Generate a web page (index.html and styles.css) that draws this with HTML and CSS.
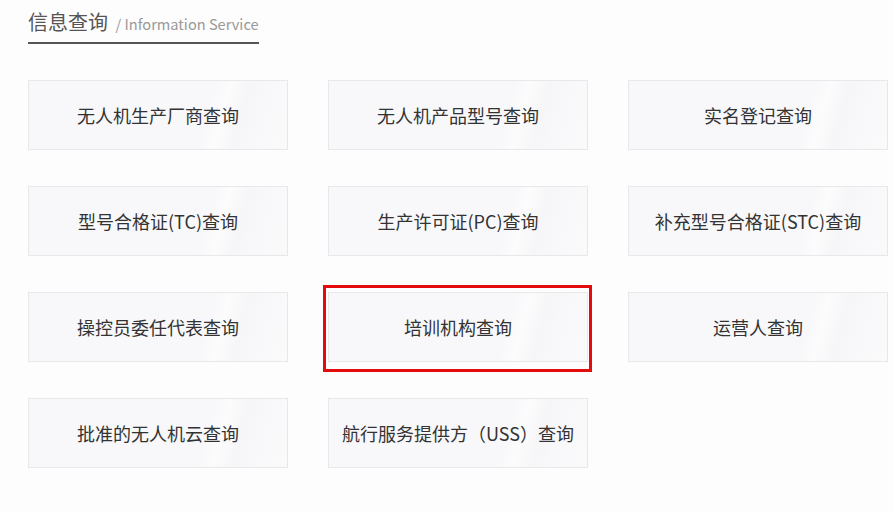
FILE: index.html
```html
<!DOCTYPE html>
<html lang="zh-CN">
<head>
    <meta charset="UTF-8">
    <title>信息查询</title>
    <link rel="stylesheet" href="styles.css">
</head>
<body>
    <div class="info-section">
        <div class="section-title">
            <span class="title-cn">信息查询</span>
            <span class="title-en">/ Information Service</span>
        </div>
        <div class="query-grid">
            <a class="query-card" href="#">无人机生产厂商查询</a>
            <a class="query-card" href="#">无人机产品型号查询</a>
            <a class="query-card" href="#">实名登记查询</a>
            <a class="query-card" href="#">型号合格证(TC)查询</a>
            <a class="query-card" href="#">生产许可证(PC)查询</a>
            <a class="query-card" href="#">补充型号合格证(STC)查询</a>
            <a class="query-card" href="#">操控员委任代表查询</a>
            <a class="query-card marked" href="#">培训机构查询</a>
            <a class="query-card" href="#">运营人查询</a>
            <a class="query-card" href="#">批准的无人机云查询</a>
            <a class="query-card" href="#">航行服务提供方（USS）查询</a>
        </div>
    </div>
</body>
</html>
```

FILE: styles.css
```css
body {
    margin: 0;
    background: #fdfdfd;
    font-family: "Microsoft YaHei", "Noto Sans CJK SC", "Noto Sans", sans-serif;
    color: #333;
}

.info-section {
    padding: 8px 28px 0;
}

.section-title {
    display: inline-block;
    padding-bottom: 4px;
    border-bottom: 2px solid #555;
    line-height: 28px;
}

.title-cn {
    font-size: 20px;
    color: #555;
}

.title-en {
    font-size: 14.6px;
    color: #999;
    margin-left: 4px;
}

.query-grid {
    display: grid;
    grid-template-columns: repeat(3, 260px);
    grid-auto-rows: 70px;
    column-gap: 40px;
    row-gap: 36px;
    margin-top: 36px;
}

.query-card {
    position: relative;
    display: flex;
    align-items: center;
    justify-content: center;
    box-sizing: border-box;
    border: 1px solid #e8e8ea;
    background: linear-gradient(105deg, #f8f8fa 0%, #f8f8fa 68%, #fcfcfd 73%, #f6f6f8 80%, #f8f8fa 87%, #fafafb 100%);
    font-size: 18px;
    color: #333;
    text-decoration: none;
}

.query-card.marked::after {
    content: '';
    position: absolute;
    top: -8px;
    left: -6px;
    right: -5px;
    bottom: -11px;
    border: 3px solid #e30b0b;
}
```
